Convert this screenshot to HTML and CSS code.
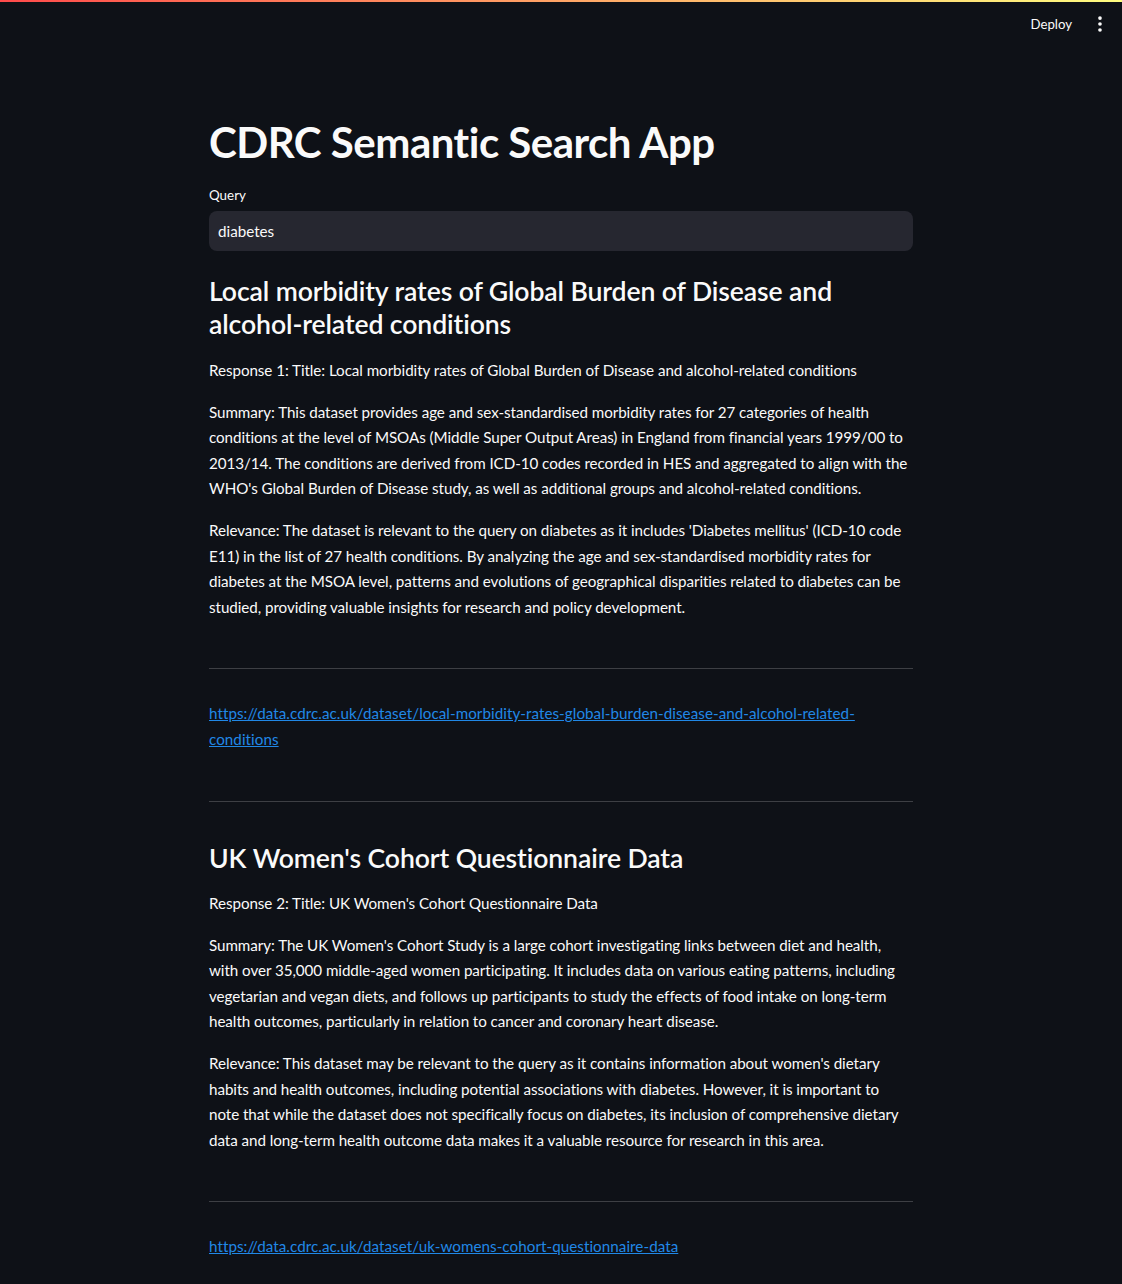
FILE: index.html
```
<!DOCTYPE html>
<html lang="en">
<head>
<meta charset="utf-8">
<title>CDRC Semantic Search App</title>
<link rel="stylesheet" href="styles.css">
</head>
<body>
<header class="app-header">
  <div class="decoration"></div>
  <div class="toolbar">
    <button class="deploy-btn" type="button">Deploy</button>
    <button class="menu-btn" type="button" aria-label="Main menu">
      <svg viewBox="0 0 24 24" width="24" height="24" aria-hidden="true">
        <circle cx="12" cy="5.5" r="2" fill="#fafafa"/>
        <circle cx="12" cy="12" r="2" fill="#fafafa"/>
        <circle cx="12" cy="18.5" r="2" fill="#fafafa"/>
      </svg>
    </button>
  </div>
</header>

<main class="main">
  <div class="block">
    <h1 class="title">CDRC Semantic Search App</h1>

    <div class="text-input">
      <label class="input-label" for="q">Query</label>
      <div class="input-box">
        <input id="q" type="text" value="diabetes">
      </div>
    </div>

    <h3 class="result-title">Local morbidity rates of Global Burden of Disease and alcohol-related conditions</h3>
    <div class="md">
      <p>Response 1: Title: Local morbidity rates of Global Burden of Disease and alcohol-related conditions</p>
      <p>Summary: This dataset provides age and sex-standardised morbidity rates for 27 categories of health conditions at the level of MSOAs (Middle Super Output Areas) in England from financial years 1999/00 to 2013/14. The conditions are derived from ICD-10 codes recorded in HES and aggregated to align with the WHO's Global Burden of Disease study, as well as additional groups and alcohol-related conditions.</p>
      <p>Relevance: The dataset is relevant to the query on diabetes as it includes 'Diabetes mellitus' (ICD-10 code E11) in the list of 27 health conditions. By analyzing the age and sex-standardised morbidity rates for diabetes at the MSOA level, patterns and evolutions of geographical disparities related to diabetes can be studied, providing valuable insights for research and policy development.</p>
    </div>
    <div class="md link-block">
      <hr>
      <p><a href="#">https://data.cdrc.ac.uk/dataset/local-morbidity-rates-global-burden-disease-and-alcohol-related-conditions</a></p>
      <hr class="last">
    </div>

    <h3 class="result-title">UK Women's Cohort Questionnaire Data</h3>
    <div class="md">
      <p>Response 2: Title: UK Women's Cohort Questionnaire Data</p>
      <p>Summary: The UK Women's Cohort Study is a large cohort investigating links between diet and health, with over 35,000 middle-aged women participating. It includes data on various eating patterns, including vegetarian and vegan diets, and follows up participants to study the effects of food intake on long-term health outcomes, particularly in relation to cancer and coronary heart disease.</p>
      <p>Relevance: This dataset may be relevant to the query as it contains information about women's dietary habits and health outcomes, including potential associations with diabetes. However, it is important to note that while the dataset does not specifically focus on diabetes, its inclusion of comprehensive dietary data and long-term health outcome data makes it a valuable resource for research in this area.</p>
    </div>
    <div class="md link-block">
      <hr>
      <p><a href="#">https://data.cdrc.ac.uk/dataset/uk-womens-cohort-questionnaire-data</a></p>
      <hr class="last">
    </div>
  </div>
</main>
</body>
</html>
```
FILE: styles.css
```
* { box-sizing: border-box; }

html, body {
  margin: 0;
  padding: 0;
  background: #0e1117;
  color: #fafafa;
  font-family: Lato, "Source Sans Pro", "Noto Sans", sans-serif;
}

.app-header {
  height: 60px;
}

.decoration {
  height: 2px;
  background: linear-gradient(90deg, rgb(255, 75, 75), rgb(255, 253, 128));
}

.toolbar {
  height: 44px;
  display: flex;
  align-items: center;
  justify-content: flex-end;
  padding-right: 8px;
  gap: 4px;
}

.deploy-btn {
  background: transparent;
  border: none;
  color: #fafafa;
  font-family: inherit;
  font-size: 13.2px;
  padding: 4px 10px;
  cursor: pointer;
}

.menu-btn {
  background: transparent;
  border: none;
  width: 28px;
  height: 28px;
  padding: 0;
  display: flex;
  align-items: center;
  justify-content: center;
  cursor: pointer;
}

.menu-btn svg {
  width: 22px;
  height: 22px;
}

.main {
  padding-top: 36px;
  padding-bottom: 80px;
}

.block {
  width: 704px;
  margin: 0 auto;
  display: flex;
  flex-direction: column;
  gap: 16px;
}

.title {
  margin: 0 0 -2px;
  padding: 20px 0 0;
  font-size: 42px;
  font-weight: 700;
  letter-spacing: -0.5px;
  line-height: 52.8px;
}

.text-input {
  display: flex;
  flex-direction: column;
}

.input-label {
  min-height: 24px;
  display: flex;
  align-items: center;
  font-size: 13.4px;
  margin-bottom: 4px;
}

.input-box {
  height: 40px;
  background: #262730;
  border-radius: 8px;
  display: flex;
  align-items: center;
  padding: 0 9px;
}

.input-box input {
  width: 100%;
  background: transparent;
  border: none;
  outline: none;
  color: #fafafa;
  font-family: inherit;
  font-size: 15.2px;
  padding: 0;
}

.result-title {
  margin: 0;
  padding: 8px 0 0;
  font-size: 26.6px;
  font-weight: 600;
  line-height: 33.6px;
  letter-spacing: -0.1px;
}

.md p {
  margin: 0 0 16px;
  font-size: 15.2px;
  line-height: 25.6px;
  letter-spacing: -0.06px;
}

.md p:last-child {
  margin-bottom: 0;
}

.link-block {
  display: flex;
  flex-direction: column;
}

.md hr {
  width: 100%;
  margin: 32px 0;
  border: none;
  height: 1px;
  background: rgba(250, 250, 250, 0.2);
}

.md hr.last {
  margin-bottom: 16px;
}

.link-block p {
  margin-bottom: 16px;
  letter-spacing: 0.05px;
}

.md a {
  color: #2188e6;
  text-decoration: underline;
}
```
